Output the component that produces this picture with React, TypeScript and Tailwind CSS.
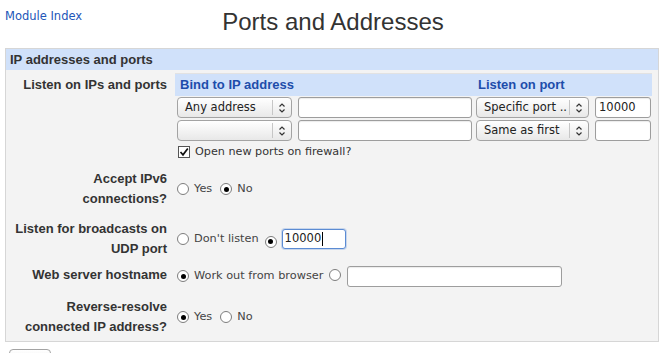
import React from 'react';

function UpDown() {
  return (
    <svg width="8" height="12" viewBox="0 0 8 12" fill="none" stroke="#333" strokeWidth="1.2">
      <path d="M1.5 4.5 L4 2 L6.5 4.5" />
      <path d="M1.5 7.5 L4 10 L6.5 7.5" />
    </svg>
  );
}

function Select({ label, className }: { label: string; className: string }) {
  return (
    <div
      className={`flex h-[21px] shrink-0 items-center rounded-[4px] border border-[#a3a3a3] bg-linear-to-b from-white to-[#e8e8e8] text-[11.5px] text-[#222] font-['DejaVu_Sans',sans-serif] ${className}`}
    >
      <span className="flex-1 truncate pl-[7px]">{label}</span>
      <span className="h-[15px] w-px bg-[#c6c6c6]" />
      <span className="flex w-[18px] justify-center">
        <UpDown />
      </span>
    </div>
  );
}

function TextBox({ value, className }: { value?: string; className: string }) {
  return (
    <div
      className={`flex h-[21px] shrink-0 items-center rounded-[3px] border border-[#9d9d9d] bg-white pl-[3px] text-[11.5px] text-[#222] font-['DejaVu_Sans',sans-serif] shadow-[inset_0_1px_1px_rgba(0,0,0,0.08)] ${className}`}
    >
      {value}
    </div>
  );
}

function Radio({ on }: { on?: boolean }) {
  return (
    <span className="inline-flex h-[12px] w-[12px] shrink-0 items-center justify-center rounded-full border border-[#7d7d7d] bg-white">
      {on && <span className="h-[5px] w-[5px] rounded-full bg-black" />}
    </span>
  );
}

function Opt({ on, text }: { on?: boolean; text: string }) {
  return (
    <span className="flex items-center">
      <Radio on={on} />
      <span className="ml-[5px] text-[11.3px] text-[#444] font-['DejaVu_Sans',sans-serif]">{text}</span>
    </span>
  );
}

function Label({ children }: { children: React.ReactNode }) {
  return (
    <div className="w-[165px] shrink-0 pr-[4px] text-right text-[13px] font-bold leading-[20px] text-[#333]">
      {children}
    </div>
  );
}

export default function App() {
  return (
    <div className="min-h-[353px] bg-white font-['Liberation_Sans',Arial,sans-serif] text-[#333]">
      <div className="grid grid-cols-[1fr_auto_1fr] items-start px-[5px] pt-[8px]">
        <a className="mt-[1px] text-[11.5px] leading-[14px] text-[#2256b8] font-['DejaVu_Sans',sans-serif]">Module Index</a>
        <h1 className="text-[24px] leading-[28px] font-normal text-[#333]">Ports and Addresses</h1>
        <div />
      </div>

      <div className="mt-[12px] ml-[5px] w-[654px] border border-[#d6d6d6] bg-[#f3f3f3]">
        <div className="h-[21px] bg-[#d0e1fa] pl-[4px] text-[13px] font-bold leading-[21px] text-[#333]">
          IP addresses and ports
        </div>

        <div className="flex pt-[3px] pb-[4px]">
          <div className="pt-[2px]">
            <Label>Listen on IPs and ports</Label>
          </div>
          <div className="pl-[4px]">
            <div className="w-[477px] border-t border-[#e2e2e2]">
              <div className="flex h-[22px] items-center bg-[#d0e1fa] text-[13px] font-bold text-[#1d4dab]">
                <span className="w-[301px] pl-[5px]">Bind to IP address</span>
                <span className="pl-[2px]">Listen on port</span>
              </div>
              <div className="mt-px flex pl-[2px]">
                <Select label="Any address" className="w-[115px]" />
                <TextBox className="ml-[6px] w-[174px]" />
                <Select label="Specific port .." className="ml-[4px] w-[113px]" />
                <TextBox value="10000" className="ml-[6px] w-[56px]" />
              </div>
              <div className="mt-[2px] flex pl-[2px]">
                <Select label="" className="w-[115px]" />
                <TextBox className="ml-[6px] w-[174px]" />
                <Select label="Same as first" className="ml-[4px] w-[113px]" />
                <TextBox className="ml-[6px] w-[56px]" />
              </div>
            </div>
            <div className="mt-[2px] flex h-[18px] items-center pl-[3px]">
              <svg width="12" height="12" viewBox="0 0 12 12">
                <rect x="0.5" y="0.5" width="11" height="11" fill="#fff" stroke="#555" />
                <path d="M2.5 6 L5 8.8 L9.8 2.5" fill="none" stroke="#111" strokeWidth="1.7" />
              </svg>
              <span className="ml-[5px] text-[11.2px] text-[#333] font-['DejaVu_Sans',sans-serif]">
                Open new ports on firewall?
              </span>
            </div>
          </div>
        </div>

        <div className="flex py-[4px]">
          <Label>
            Accept IPv6
            <br />
            connections?
          </Label>
          <div className="flex items-center gap-[8px] pl-[6px]">
            <Opt text="Yes" />
            <Opt on text="No" />
          </div>
        </div>

        <div className="flex pt-[6px] pb-[2px]">
          <Label>
            Listen for broadcasts on
            <br />
            UDP port
          </Label>
          <div className="flex items-center pl-[6px]">
            <Opt text="Don't listen" />
            <span className="ml-[6px]">
              <Radio on />
            </span>
            <div className="ml-[5px] flex h-[20px] w-[64px] items-center rounded-[3px] border border-[#5b8bd3] bg-white pl-[2px] text-[11.5px] text-[#222] font-['DejaVu_Sans',sans-serif] shadow-[0_0_0_1px_rgba(120,160,220,0.35)]">
              10000
              <span className="ml-px h-[14px] w-px bg-black" />
            </div>
          </div>
        </div>

        <div className="flex pt-[4px] pb-[4px]">
          <Label>Web server hostname</Label>
          <div className="flex h-[22px] items-center pl-[6px]">
            <Opt on text="Work out from browser" />
            <span className="ml-[6px]">
              <Radio />
            </span>
            <TextBox className="ml-[6px] w-[215px]" />
          </div>
        </div>

        <div className="flex pt-[6px] pb-[4px]">
          <Label>
            Reverse-resolve
            <br />
            connected IP address?
          </Label>
          <div className="flex items-center gap-[8px] pl-[6px]">
            <Opt on text="Yes" />
            <Opt text="No" />
          </div>
        </div>
      </div>

      <button className="mt-[7px] ml-[9px] h-[20px] w-[42px] rounded-[4px] border border-[#a3a3a3] bg-linear-to-b from-white to-[#e8e8e8]" />
    </div>
  );
}
